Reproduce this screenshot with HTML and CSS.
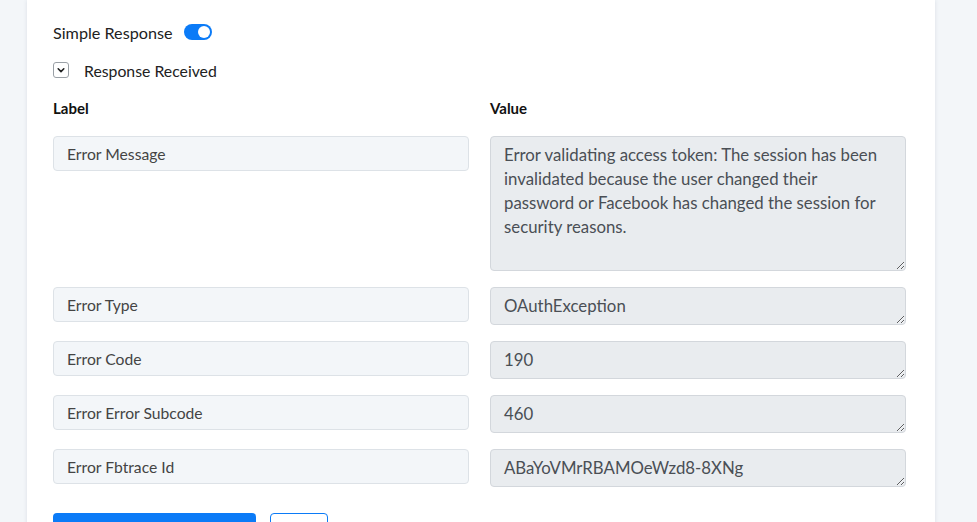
FILE: index.html
```html
<!DOCTYPE html>
<html lang="en">
<head>
  <meta charset="UTF-8">
  <meta name="viewport" content="width=device-width, initial-scale=1.0">
  <title>Response Received</title>
  <link rel="stylesheet" href="styles.css">
</head>
<body>
  <div class="card">
    <div class="switch-row">
      <span>Simple Response</span>
      <span class="switch"><span class="knob"></span></span>
    </div>

    <div class="toggle-row">
      <span class="chevron-box">
        <svg width="10" height="10" viewBox="0 0 10 10"><path d="M2.2 3.8 L5 6.6 L7.8 3.8" fill="none" stroke="#222" stroke-width="1.6" stroke-linecap="round" stroke-linejoin="round"/></svg>
      </span>
      <span>Response Received</span>
    </div>

    <div class="fields">
      <div class="head">Label</div>
      <div class="head">Value</div>

      <input class="label-input" type="text" value="Error Message" readonly>
      <textarea class="value-input tall" readonly>Error validating access token: The session has been
invalidated because the user changed their
password or Facebook has changed the session for
security reasons.</textarea>

      <input class="label-input" type="text" value="Error Type" readonly>
      <textarea class="value-input" readonly>OAuthException</textarea>

      <input class="label-input" type="text" value="Error Code" readonly>
      <textarea class="value-input" readonly>190</textarea>

      <input class="label-input" type="text" value="Error Error Subcode" readonly>
      <textarea class="value-input" readonly>460</textarea>

      <input class="label-input" type="text" value="Error Fbtrace Id" readonly>
      <textarea class="value-input" readonly>ABaYoVMrRBAMOeWzd8-8XNg</textarea>
    </div>

    <div class="actions">
      <button class="btn-primary" aria-label="Save"></button>
      <button class="btn-outline" aria-label="Back"></button>
    </div>
  </div>
</body>
</html>
```

FILE: styles.css
```css
body {
  margin: 0;
  background: #f3f6f9;
  font-family: Lato, "Open Sans", sans-serif;
  color: #222;
  height: 100vh;
  overflow: hidden;
}
.card {
  margin-left: 27px;
  width: 908px;
  box-sizing: border-box;
  padding: 21px 29px 40px 26px;
  background: #ffffff;
  box-shadow: 0 0 4px rgba(40, 60, 90, 0.12);
  min-height: 100vh;
}
.switch-row {
  display: flex;
  align-items: center;
  gap: 12px;
  height: 22px;
  font-size: 16.2px;
}
.switch {
  position: relative;
  width: 28px;
  height: 16px;
  border-radius: 8px;
  background: #0b7bf7;
  margin-left: -1px;
}
.knob {
  position: absolute;
  top: 2px;
  right: 2px;
  width: 12px;
  height: 12px;
  border-radius: 50%;
  background: #ffffff;
}
.toggle-row {
  display: flex;
  align-items: center;
  gap: 15px;
  height: 22px;
  margin-top: 16px;
  font-size: 15.8px;
}
.chevron-box {
  width: 14px;
  height: 14px;
  border: 1px solid #9aa0a6;
  border-radius: 3px;
  display: flex;
  align-items: center;
  justify-content: center;
}
.fields {
  display: grid;
  grid-template-columns: 1fr 1fr;
  column-gap: 21px;
  row-gap: 16px;
  margin-top: 16px;
  align-items: start;
}
.head {
  font-weight: 700;
  font-size: 15px;
  line-height: 22px;
  color: #111;
  margin-bottom: 1px;
}
.label-input {
  box-sizing: border-box;
  width: 100%;
  height: 35px;
  padding: 0 13px;
  border: 1px solid #dde2e7;
  border-radius: 4px;
  background: #f3f6f9;
  font-family: inherit;
  font-size: 15.7px;
  color: #444;
  outline: none;
}
.value-input {
  box-sizing: border-box;
  width: 100%;
  height: 38px;
  padding: 6px 13px;
  border: 1px solid #d3d7dc;
  border-radius: 4px;
  background: #e9ecef;
  font-family: inherit;
  font-size: 16.8px;
  line-height: 24px;
  color: #4a4f55;
  outline: none;
  overflow: hidden;
  display: block;
}
.value-input.tall {
  height: 135px;
}
.actions {
  display: flex;
  gap: 14px;
  margin-top: 26px;
}
.btn-primary {
  width: 203px;
  height: 38px;
  border: none;
  border-radius: 4px;
  background: #0b7bf7;
}
.btn-outline {
  width: 58px;
  height: 38px;
  border: 1px solid #0b7bf7;
  border-radius: 4px;
  background: #fff;
}
```
